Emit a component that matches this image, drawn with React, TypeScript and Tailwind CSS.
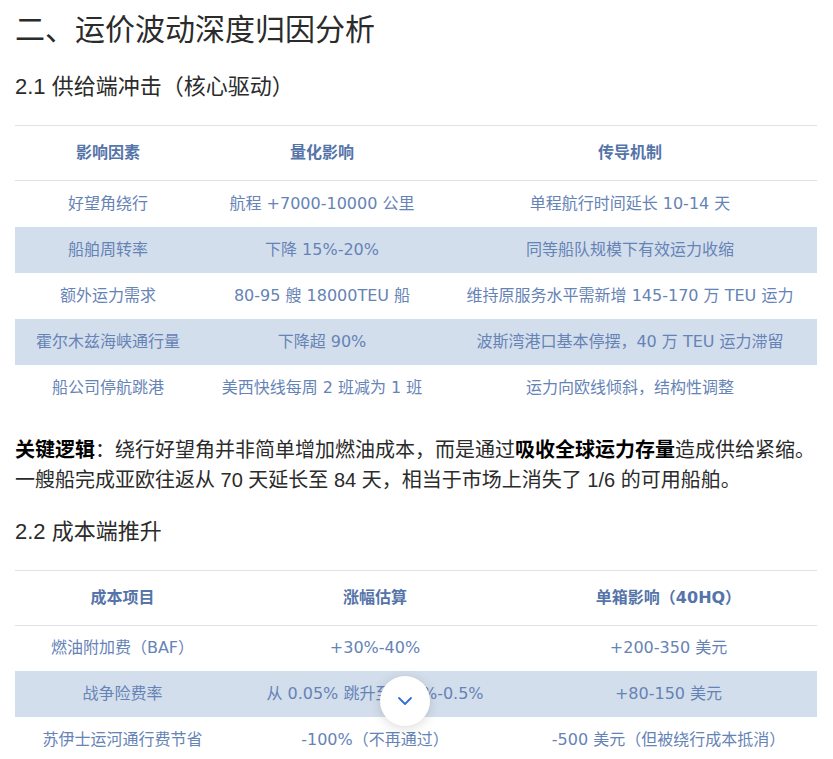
import { ChevronDown } from "lucide-react";

type Row = string[];

interface DataTableProps {
  head: Row;
  rows: Row[];
  widths: string[];
}

const DataTable = ({ head, rows, widths }: DataTableProps) => {
  return (
    <table className="w-full border-collapse table-fixed font-['DejaVu_Sans','Noto_Sans_CJK_SC',sans-serif] text-[16px]">
      <colgroup>
        {widths.map((w, i) => (
          <col key={i} className={w} />
        ))}
      </colgroup>
      <thead>
        <tr className="border-t border-b border-[#dde1e8]">
          {head.map((h) => (
            <th
              key={h}
              className="h-[55px] text-center font-bold text-[#5574a9]"
            >
              {h}
            </th>
          ))}
        </tr>
      </thead>
      <tbody>
        {rows.map((r, i) => (
          <tr key={i} className={i % 2 === 1 ? "bg-[#d3deec]" : "bg-white"}>
            {r.map((c, j) => (
              <td
                key={j}
                className="h-[46px] text-center text-[#6683b6] whitespace-nowrap"
              >
                {c}
              </td>
            ))}
          </tr>
        ))}
      </tbody>
    </table>
  );
};

const supplyRows: Row[] = [
  ["好望角绕行", "航程 +7000-10000 公里", "单程航行时间延长 10-14 天"],
  ["船舶周转率", "下降 15%-20%", "同等船队规模下有效运力收缩"],
  ["额外运力需求", "80-95 艘 18000TEU 船", "维持原服务水平需新增 145-170 万 TEU 运力"],
  ["霍尔木兹海峡通行量", "下降超 90%", "波斯湾港口基本停摆，40 万 TEU 运力滞留"],
  ["船公司停航跳港", "美西快线每周 2 班减为 1 班", "运力向欧线倾斜，结构性调整"],
];

const costRows: Row[] = [
  ["燃油附加费（BAF）", "+30%-40%", "+200-350 美元"],
  ["战争险费率", "从 0.05% 跳升至 0.3%-0.5%", "+80-150 美元"],
  ["苏伊士运河通行费节省", "-100%（不再通过）", "-500 美元（但被绕行成本抵消）"],
];

export default function App() {
  return (
    <div className="min-h-screen bg-white pl-[15px] pr-[16px] font-['Liberation_Sans','Noto_Sans_CJK_SC',sans-serif] text-[#2b2b2b]">
      <h1 className="pt-[10px] text-[30px] leading-[40px] font-normal">
        二、运价波动深度归因分析
      </h1>
      <h2 className="mt-[21px] text-[22px] leading-[32px] font-normal">
        2.1 供给端冲击（核心驱动）
      </h2>
      <div className="mt-[22px]">
        <DataTable
          head={["影响因素", "量化影响", "传导机制"]}
          rows={supplyRows}
          widths={["w-[186px]", "w-[242px]", "w-auto"]}
        />
      </div>
      <p className="mt-[24px] text-[20px] leading-[30px] text-[#2b2b2b]">
        <strong className="font-bold text-black">关键逻辑</strong>
        ：绕行好望角并非简单增加燃油成本，而是通过
        <strong className="font-bold text-black">吸收全球运力存量</strong>
        造成供给紧缩。
        <br />
        一艘船完成亚欧往返从 70 天延长至 84 天，相当于市场上消失了 1/6 的可用船舶。
      </p>
      <h2 className="mt-[21px] text-[22px] leading-[32px] font-normal">
        2.2 成本端推升
      </h2>
      <div className="mt-[22px]">
        <DataTable
          head={["成本项目", "涨幅估算", "单箱影响（40HQ）"]}
          rows={costRows}
          widths={["w-[215px]", "w-[290px]", "w-auto"]}
        />
      </div>
      <button className="fixed left-[380px] top-[676px] flex h-[50px] w-[50px] items-center justify-center rounded-full bg-white shadow-[0_2px_12px_rgba(0,0,0,0.15)]">
        <ChevronDown className="h-6 w-6 text-[#2f6fd6]" strokeWidth={1.8} />
      </button>
    </div>
  );
}
